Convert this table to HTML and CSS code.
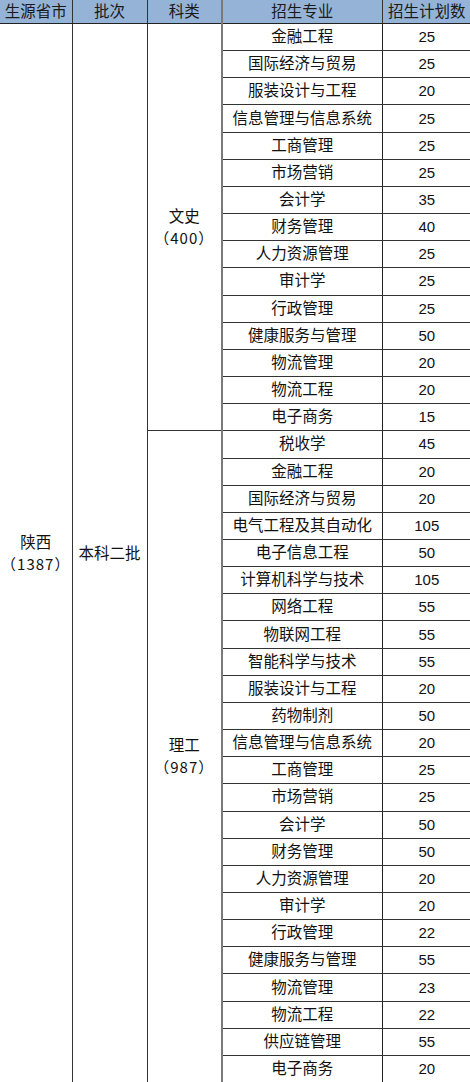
FILE: index.html
```html
<!DOCTYPE html>
<html lang="zh-CN">
<head>
<meta charset="utf-8">
<title>招生计划</title>
<link rel="stylesheet" href="styles.css">
</head>
<body>
<table class="plan">
  <colgroup>
    <col class="c1"><col class="c2"><col class="c3"><col class="c4"><col class="c5">
  </colgroup>
  <thead>
    <tr class="head">
      <th class="b1">生源省市</th><th class="b2">批次</th><th class="b3">科类</th><th class="b4">招生专业</th><th class="b5">招生计划数</th>
    </tr>
  </thead>
  <tbody>
    <tr><td class="span b1" rowspan="39">陕西<br><span class="paren">（1387）</span></td><td class="span b2" rowspan="39">本科二批</td><td class="span b3 grp" rowspan="15">文史<br><span class="paren">（400）</span></td><td class="m">金融工程</td><td class="n">25</td></tr>
    <tr><td class="m">国际经济与贸易</td><td class="n">25</td></tr>
    <tr><td class="m">服装设计与工程</td><td class="n">20</td></tr>
    <tr><td class="m">信息管理与信息系统</td><td class="n">25</td></tr>
    <tr><td class="m">工商管理</td><td class="n">25</td></tr>
    <tr><td class="m">市场营销</td><td class="n">25</td></tr>
    <tr><td class="m">会计学</td><td class="n">35</td></tr>
    <tr><td class="m">财务管理</td><td class="n">40</td></tr>
    <tr><td class="m">人力资源管理</td><td class="n">25</td></tr>
    <tr><td class="m">审计学</td><td class="n">25</td></tr>
    <tr><td class="m">行政管理</td><td class="n">25</td></tr>
    <tr><td class="m">健康服务与管理</td><td class="n">50</td></tr>
    <tr><td class="m">物流管理</td><td class="n">20</td></tr>
    <tr><td class="m">物流工程</td><td class="n">20</td></tr>
    <tr><td class="m">电子商务</td><td class="n">15</td></tr>
    <tr><td class="span b3 last" rowspan="24">理工<br><span class="paren">（987）</span></td><td class="m">税收学</td><td class="n">45</td></tr>
    <tr><td class="m">金融工程</td><td class="n">20</td></tr>
    <tr><td class="m">国际经济与贸易</td><td class="n">20</td></tr>
    <tr><td class="m">电气工程及其自动化</td><td class="n">105</td></tr>
    <tr><td class="m">电子信息工程</td><td class="n">50</td></tr>
    <tr><td class="m">计算机科学与技术</td><td class="n">105</td></tr>
    <tr><td class="m">网络工程</td><td class="n">55</td></tr>
    <tr><td class="m">物联网工程</td><td class="n">55</td></tr>
    <tr><td class="m">智能科学与技术</td><td class="n">55</td></tr>
    <tr><td class="m">服装设计与工程</td><td class="n">20</td></tr>
    <tr><td class="m">药物制剂</td><td class="n">50</td></tr>
    <tr><td class="m">信息管理与信息系统</td><td class="n">20</td></tr>
    <tr><td class="m">工商管理</td><td class="n">25</td></tr>
    <tr><td class="m">市场营销</td><td class="n">25</td></tr>
    <tr><td class="m">会计学</td><td class="n">50</td></tr>
    <tr><td class="m">财务管理</td><td class="n">50</td></tr>
    <tr><td class="m">人力资源管理</td><td class="n">20</td></tr>
    <tr><td class="m">审计学</td><td class="n">20</td></tr>
    <tr><td class="m">行政管理</td><td class="n">22</td></tr>
    <tr><td class="m">健康服务与管理</td><td class="n">55</td></tr>
    <tr><td class="m">物流管理</td><td class="n">23</td></tr>
    <tr><td class="m">物流工程</td><td class="n">22</td></tr>
    <tr><td class="m">供应链管理</td><td class="n">55</td></tr>
    <tr class="lastrow"><td class="m">电子商务</td><td class="n">20</td></tr>
  </tbody>
</table>
</body>
</html>
```

FILE: styles.css
```css
html, body {
  margin: 0;
  padding: 0;
  background: #ffffff;
  overflow: hidden;
}

.plan {
  border-collapse: collapse;
  table-layout: fixed;
  width: 471px;
  font-family: "Liberation Sans", "Noto Sans CJK SC", sans-serif;
  font-size: 15.5px;
  color: #111111;
}

.c1 { width: 72px; }
.c2 { width: 75px; }
.c3 { width: 75px; }
.c4 { width: 160px; }
.c5 { width: 89px; }

.plan th,
.plan td {
  padding: 0;
  text-align: center;
  vertical-align: middle;
  white-space: nowrap;
  overflow: hidden;
}

.head th {
  height: 23px;
  background: #95b3d7;
  font-weight: normal;
  line-height: 22px;
  border-bottom: 1px solid #222222;
  color: #1a1a1a;
}

.b1, .b2 { border-right: 1px solid #333333; }
.b3 { border-right: 2px solid #7a7a7a; }
.b4 { border-right: 1px solid #333333; }

.plan tbody tr {
  height: 27.16px;
}

.m {
  border-bottom: 1px solid #333333;
  border-right: 1px solid #222222;
  line-height: 20px;
}

.n {
  border-bottom: 1px solid #333333;
  line-height: 20px;
  font-size: 15px;
}

.grp {
  border-bottom: 1px solid #333333;
}

.lastrow .m,
.lastrow .n {
  border-bottom: none;
}

.span {
  line-height: 21px;
}

.paren {
  font-family: "Noto Sans CJK SC", sans-serif;
  font-size: 15px;
  letter-spacing: 1px;
}
```
